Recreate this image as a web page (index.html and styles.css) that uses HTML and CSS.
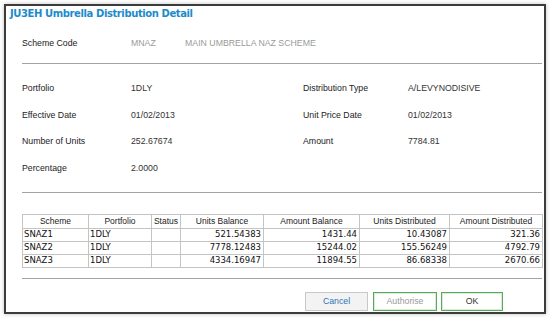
FILE: index.html
```html
<!DOCTYPE html>
<html lang="en">
<head>
    <meta charset="UTF-8">
    <title>Umbrella Distribution Detail</title>
    <link rel="stylesheet" href="styles.css">
</head>
<body>
    <div class="dialog">
        <h1 class="title">JU3EH Umbrella Distribution Detail</h1>

        <div class="content">
            <div class="scheme-row">
                <span class="label">Scheme Code</span>
                <span class="muted code">MNAZ</span>
                <span class="muted">MAIN UMBRELLA NAZ SCHEME</span>
            </div>

            <div class="divider"></div>

            <div class="fields">
                <span class="label">Portfolio</span>
                <span class="value">1DLY</span>
                <span class="label">Distribution Type</span>
                <span class="value">A/LEVYNODISIVE</span>

                <span class="label">Effective Date</span>
                <span class="value">01/02/2013</span>
                <span class="label">Unit Price Date</span>
                <span class="value">01/02/2013</span>

                <span class="label">Number of Units</span>
                <span class="value">252.67674</span>
                <span class="label">Amount</span>
                <span class="value">7784.81</span>

                <span class="label">Percentage</span>
                <span class="value">2.0000</span>
                <span></span>
                <span></span>
            </div>

            <div class="divider"></div>

            <!-- distribution per scheme -->
            <table class="grid">
                <thead>
                    <tr>
                        <th class="c-scheme">Scheme</th>
                        <th class="c-portfolio">Portfolio</th>
                        <th class="c-status">Status</th>
                        <th class="c-ub">Units Balance</th>
                        <th class="c-ab">Amount Balance</th>
                        <th class="c-ud">Units Distributed</th>
                        <th class="c-ad">Amount Distributed</th>
                    </tr>
                </thead>
                <tbody>
                    <tr>
                        <td>SNAZ1</td>
                        <td>1DLY</td>
                        <td></td>
                        <td class="num">521.54383</td>
                        <td class="num">1431.44</td>
                        <td class="num">10.43087</td>
                        <td class="num">321.36</td>
                    </tr>
                    <tr>
                        <td>SNAZ2</td>
                        <td>1DLY</td>
                        <td></td>
                        <td class="num">7778.12483</td>
                        <td class="num">15244.02</td>
                        <td class="num">155.56249</td>
                        <td class="num">4792.79</td>
                    </tr>
                    <tr>
                        <td>SNAZ3</td>
                        <td>1DLY</td>
                        <td></td>
                        <td class="num">4334.16947</td>
                        <td class="num">11894.55</td>
                        <td class="num">86.68338</td>
                        <td class="num">2670.66</td>
                    </tr>
                </tbody>
            </table>

            <div class="divider bottom"></div>

            <div class="actions">
                <button type="button" class="btn btn-cancel">Cancel</button>
                <button type="button" class="btn btn-green btn-disabled">Authorise</button>
                <button type="button" class="btn btn-green btn-ok">OK</button>
            </div>
        </div>
    </div>
</body>
</html>
```

FILE: styles.css
```css
body {
    margin: 0;
    background-color: #fff;
    font-family: "Liberation Sans", Arial, sans-serif;
    color: #222;
}

/* Dialog frame */
.dialog {
    margin: 4px;
    width: 538px;
    height: 306px;
    border: 2px solid #3c3c3c;
    background-color: #fff;
    box-shadow: 0 0 4px rgba(0, 0, 0, 0.25);
}

.title {
    margin: 0;
    padding: 1px 0 0 4px;
    font-family: "DejaVu Sans", Verdana, sans-serif;
    font-size: 10px;
    letter-spacing: -0.4px;
    line-height: 14px;
    font-weight: bold;
    color: #1b8bcb;
}

.content {
    padding: 0 2px 0 16px;
}

.label,
.value,
.muted {
    font-size: 8.75px;
    line-height: 16px;
}

.value {
    color: #333;
}

.muted {
    color: #9a9a9a;
}

/* Scheme code line */
.scheme-row {
    display: flex;
    margin-top: 14px;
    height: 16px;
}

.scheme-row .label {
    width: 109px;
}

.scheme-row .code {
    width: 54px;
}

.divider {
    border-top: 1px solid #a3a3a3;
    margin-top: 12px;
}

/* Detail fields */
.fields {
    display: grid;
    grid-template-columns: 109px 172px 105px 1fr;
    grid-auto-rows: 16px;
    row-gap: 10.5px;
    margin-top: 16px;
    margin-bottom: 16px;
}

/* Table */
.grid {
    margin-top: 21px;
    width: 520px;
    border-collapse: collapse;
    table-layout: fixed;
    border: 1px solid #a8a8a8;
}

.grid th,
.grid td {
    box-sizing: border-box;
    border: 1px solid #c4c4c4;
}

.grid th {
    font-family: "Liberation Sans", Arial, sans-serif;
    font-weight: normal;
    font-size: 8.5px;
    height: 14px;
    padding: 0;
    text-align: center;
    color: #222;
}

.grid td {
    font-family: "DejaVu Sans", Verdana, sans-serif;
    font-size: 8.5px;
    height: 13px;
    line-height: 11px;
    padding: 0 2px 0 1px;
    color: #111;
}

.grid td.num {
    text-align: right;
}

.c-scheme { width: 66px; }
.c-portfolio { width: 63px; }
.c-status { width: 29px; }
.c-ub { width: 83px; }
.c-ab { width: 96px; }
.c-ud { width: 90px; }
.c-ad { width: 93px; }

.divider.bottom {
    margin-top: 10px;
}

/* Buttons */
.actions {
    display: flex;
    gap: 5px;
    margin-top: 13px;
    padding-left: 283px;
}

.btn {
    width: 64px;
    height: 19px;
    padding: 0;
    font-family: "Liberation Sans", Arial, sans-serif;
    font-size: 8.75px;
    background-color: #fff;
    cursor: pointer;
}

.btn-cancel {
    width: 63px;
    background-color: #f3f3f3;
    border: 1px solid #c8c8c8;
    color: #2f74b5;
}

.btn-green {
    border: 1px solid #5aa95a;
    box-shadow: inset 0 0 0 1px #d6ecd6;
    color: #333;
}

.btn-disabled {
    color: #9a9a9a;
}

.btn-ok {
    width: 62px;
    margin-left: -1px;
}
```
